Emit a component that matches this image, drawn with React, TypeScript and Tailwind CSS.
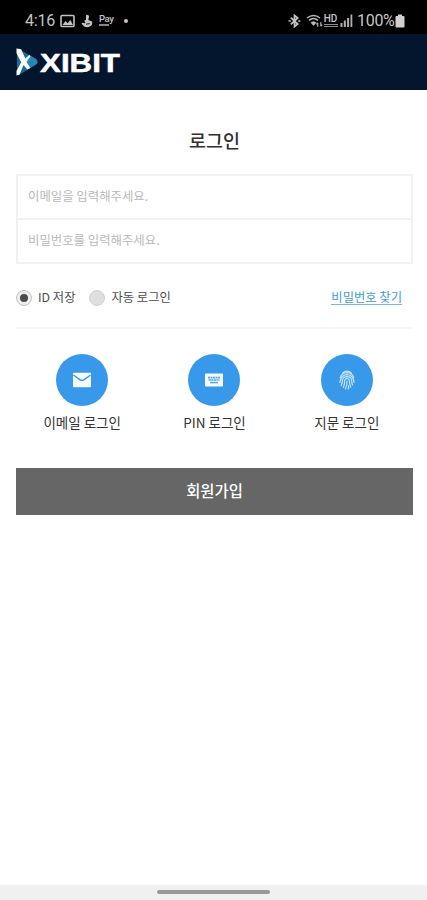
import { useState } from 'react';
import type { ReactNode } from 'react';

interface LoginMethod {
  id: string;
  label: string;
  icon: ReactNode;
}

const loginMethods: LoginMethod[] = [
  { id: 'email', label: '이메일 로그인', icon: <MailIcon /> },
  { id: 'pin', label: 'PIN 로그인', icon: <KeyboardIcon /> },
  { id: 'fingerprint', label: '지문 로그인', icon: <FingerprintIcon /> },
];

function MailIcon() {
  return (
    <svg width="20" height="16" viewBox="0 0 20 16">
      <rect x="1" y="0.8" width="18" height="14.4" rx="0.8" fill="#f6fbff" />
      <path d="M1.4 3 L8.2 7.8 Q10 9 11.8 7.8 L18.6 3" fill="none" stroke="#3899ea" strokeWidth="1.4" />
    </svg>
  );
}

function KeyboardIcon() {
  return (
    <svg width="20" height="14" viewBox="0 0 20 14">
      <rect x="1" y="0.5" width="18" height="13" rx="0.8" fill="#f6fbff" />
      <g stroke="#3899ea" strokeWidth="1.7" opacity="0.85">
        <path d="M4 4.6 H16" strokeDasharray="2 0.5" />
        <path d="M4.6 7 H15.5" strokeDasharray="2.2 0.4" />
        <path d="M6 9.6 H14" strokeWidth="1.4" />
      </g>
    </svg>
  );
}

function FingerprintIcon() {
  return (
    <svg width="16" height="20" viewBox="0 0 16 20" fill="none" stroke="#c4e2fb" strokeWidth="1.2" strokeLinecap="round">
      <path d="M3.5 3.2 Q8 -1 12.5 3.2" />
      <path d="M1.2 7.5 Q3 2.8 8 2.6 Q13 2.8 14.8 7.5" />
      <path d="M1 12.5 Q1.6 5 8 4.7 Q14.4 5 15 12.5" />
      <path d="M2.3 15.4 Q3.6 12.5 3.5 10 Q4 6.8 8 6.7 Q12 6.8 12.5 10 Q12.6 13 13.6 15" />
      <path d="M4.3 17.4 Q6 14 5.6 10.5 Q6 8.7 8 8.7 Q10 8.7 10.4 10.5 Q10.4 14.2 11.8 17" />
      <path d="M6.4 18.8 Q8.2 15 8 11 M9.2 18.9 Q9.9 17.6 9.6 15.5" />
    </svg>
  );
}

function StatusBar() {
  return (
    <div className="flex h-[34px] shrink-0 items-center justify-between bg-black pl-[25px] pr-[22px] pt-[7px] text-[#c4c4c4]">
      <div className="flex items-center">
        <span className="w-[30px] whitespace-nowrap font-['Roboto',sans-serif] text-[16px] leading-5 tracking-[-0.2px]">4:16</span>
        <svg className="ml-[5px]" width="15" height="14" viewBox="0 0 15 14">
          <rect x="1" y="1.5" width="13" height="11" rx="1" fill="none" stroke="#c4c4c4" strokeWidth="1.6" />
          <path d="M2.5 11 L5.5 7 L7.7 9.3 L10.3 6 L13 11 Z" fill="#c4c4c4" />
        </svg>
        <svg className="ml-[6px]" width="12" height="14" viewBox="0 0 12 14" fill="#c4c4c4">
          <path d="M5 1.2 Q7.5 0 8 2.3 L7.4 6 L11 7.5 Q12 10.5 9.3 12.3 Q6 14 3.2 12.4 L0.5 9.6 Q1.5 8.3 3.5 9.2 L4.4 8.8 L3.2 6.8 L5 5.7 Z" />
          <path d="M5 10.2 L8.8 9.6" stroke="#000" strokeWidth="0.9" />
        </svg>
        <div className="ml-[6px] flex h-[14px] w-4 flex-col items-start">
          <span className="font-['Roboto',sans-serif] text-[9.5px] font-medium leading-[9px] tracking-[-0.4px]">Pay</span>
          <span className="mt-px h-0.5 w-[10px] bg-[#858585]" />
        </div>
        <span className="ml-[9px] h-1 w-1 rounded-full bg-[#c4c4c4]" />
      </div>

      <div className="flex items-center">
        <svg width="13" height="14" viewBox="0 0 13 14" fill="none" stroke="#c4c4c4" strokeWidth="1.7">
          <path d="M2.8 3.7 L9.7 10 L6.5 12.6 V1.4 L9.7 4 L2.8 10.3" />
          <path d="M0.6 7 H2.8 M10.2 7 H12.4" />
        </svg>
        <svg className="ml-[5px]" width="17" height="14" viewBox="0 0 17 14" fill="none" stroke="#b8b8b8" strokeWidth="1.5">
          <path d="M1 4 Q7.5 -1 14 4" />
          <path d="M3 6.3 Q7.5 2.8 12 6.3" />
          <path d="M5 8.6 Q7.5 6.7 10 8.6 L7.5 11.4 Z" fill="#b8b8b8" strokeWidth="0.8" />
          <path d="M11.8 12.8 V9 M10.4 10.3 L11.8 8.8 M14.8 8 V12 M16.2 10.7 L14.8 12.3" strokeWidth="1.1" />
        </svg>
        <div className="flex w-[15px] flex-col items-center">
          <span className="font-['Roboto',sans-serif] text-[10px] font-medium leading-[8px]">HD</span>
          <span className="mt-px h-[3px] w-[14px] border-y border-[#8d8d8d]" />
        </div>
        <svg className="ml-0.5" width="13" height="13" viewBox="0 0 13 13" fill="#b0b0b0">
          <rect x="0.5" y="9" width="2" height="4" />
          <rect x="3.8" y="6.5" width="2" height="6.5" />
          <rect x="7.1" y="4" width="2" height="9" />
          <rect x="10.5" y="0.5" width="1.8" height="12.5" />
        </svg>
        <span className="ml-[4px] w-[38px] whitespace-nowrap font-['Roboto',sans-serif] text-[16px] leading-5 tracking-[-0.3px]">100%</span>
        <svg width="10" height="14" viewBox="0 0 10 14" fill="#d0d0d0">
          <path d="M3 0.5 H7 V2 H8.5 Q9.5 2 9.5 3 V12.5 Q9.5 13.5 8.5 13.5 H1.5 Q0.5 13.5 0.5 12.5 V3 Q0.5 2 1.5 2 H3 Z" />
        </svg>
      </div>
    </div>
  );
}

function Logo() {
  return (
    <div className="flex items-center">
      <svg width="22" height="28" viewBox="0 0 22 28">
        <path d="M1 1 Q1 0 3 1 L20 11 Q23 14 20 16.5 L3 27 Q1 28 1 26 Z" fill="#17699b" />
        <path d="M10 14 L15 8.3 L20 11 Q23 14 20 16.5 L14 20 Z" fill="#2587b8" />
        <path d="M0.5 0.5 L5.2 1.2 L9.3 10.5 L13.2 7 L14.7 8 L10.5 14 L14.3 20 L11.2 21.5 L7.5 17 L3.6 26.5 L0.5 27.5 V23 L5.2 14.2 L0.5 5.2 Z" fill="#fff" />
      </svg>
      <svg className="ml-px" width="86" height="40" viewBox="0 0 86 40">
        <text
          x="1"
          y="30"
          fill="#fff"
          stroke="#fff"
          strokeWidth="0.5"
          textLength="80"
          lengthAdjust="spacingAndGlyphs"
          fontFamily="Liberation Sans, sans-serif"
          fontSize="26.5"
          fontWeight="700"
        >
          XIBIT
        </text>
      </svg>
    </div>
  );
}

function Radio({ label, checked, onSelect }: { label: string; checked: boolean; onSelect: () => void }) {
  return (
    <button role="radio" aria-checked={checked} onClick={onSelect} className="flex items-center">
      <span
        className={`mt-0.5 flex h-4 w-4 items-center justify-center rounded-full border ${
          checked ? 'border-[#c3c3c3] bg-[#ededed]' : 'border-[#d2d2d2] bg-[#dedede]'
        }`}
      >
        {checked && <span className="h-2 w-2 rounded-full bg-[#4c4c4c]" />}
      </span>
      <span className="ml-1.5 text-[12.3px] leading-5 text-[#4d4d4d]">{label}</span>
    </button>
  );
}

export default function App() {
  const [email, setEmail] = useState('');
  const [password, setPassword] = useState('');
  const [mode, setMode] = useState('save');

  return (
    <div className="flex h-[900px] w-full flex-col overflow-hidden bg-white font-['Noto_Sans_CJK_KR',sans-serif]">
      <StatusBar />

      <header className="flex h-14 shrink-0 items-center bg-[#03162e] pl-4">
        <Logo />
      </header>

      <main className="flex-1 pl-4 pr-[14px]">
        <h1 className="mt-[37px] h-[27px] text-center text-[18.5px] font-medium leading-[27px] text-[#303030]">로그인</h1>

        <div className="mt-[20px] flex h-[90px] flex-col border-2 border-[#f1f1f1]">
          <input
            value={email}
            onChange={(e) => setEmail(e.target.value)}
            placeholder="이메일을 입력해주세요."
            className="h-[44px] w-full border-b-2 border-[#f1f1f1] px-[10px] pb-[3px] text-[12.4px] text-[#333] outline-none placeholder:text-[#b9b9b9]"
          />
          <input
            type="password"
            value={password}
            onChange={(e) => setPassword(e.target.value)}
            placeholder="비밀번호를 입력해주세요."
            className="h-[42px] w-full px-[10px] pb-0.5 text-[12.4px] text-[#333] outline-none placeholder:text-[#b9b9b9]"
          />
        </div>

        <div className="flex h-[65px] items-center justify-between border-b-2 border-[#f6f6f6] pr-[11px]">
          <div className="flex gap-[14px] pt-[3px]">
            <Radio label="ID 저장" checked={mode === 'save'} onSelect={() => setMode('save')} />
            <Radio label="자동 로그인" checked={mode === 'auto'} onSelect={() => setMode('auto')} />
          </div>
          <a href="#" className="mt-1 border-b border-[#75b7e5] text-[12.3px] leading-[14px] text-[#3d9be0]">
            비밀번호 찾기
          </a>
        </div>

        <div className="mt-[25px] grid grid-cols-3">
          {loginMethods.map((method) => (
            <button key={method.id} className="flex flex-col items-center">
              <span className="flex h-[52px] w-[52px] items-center justify-center rounded-full bg-[#3899ea]">
                {method.icon}
              </span>
              <span className="mt-[6px] text-[13.5px] leading-5 text-[#333]">{method.label}</span>
            </button>
          ))}
        </div>

        <button className="mt-9 block h-[47px] w-full bg-[#666] pb-0.5 text-[15.4px] font-medium text-white">
          회원가입
        </button>
      </main>

      <div className="flex h-[15px] shrink-0 justify-center bg-[#f0f0f0] pt-[5px]">
        <div className="h-1 w-[113px] rounded-full bg-[#999]" />
      </div>
    </div>
  );
}
